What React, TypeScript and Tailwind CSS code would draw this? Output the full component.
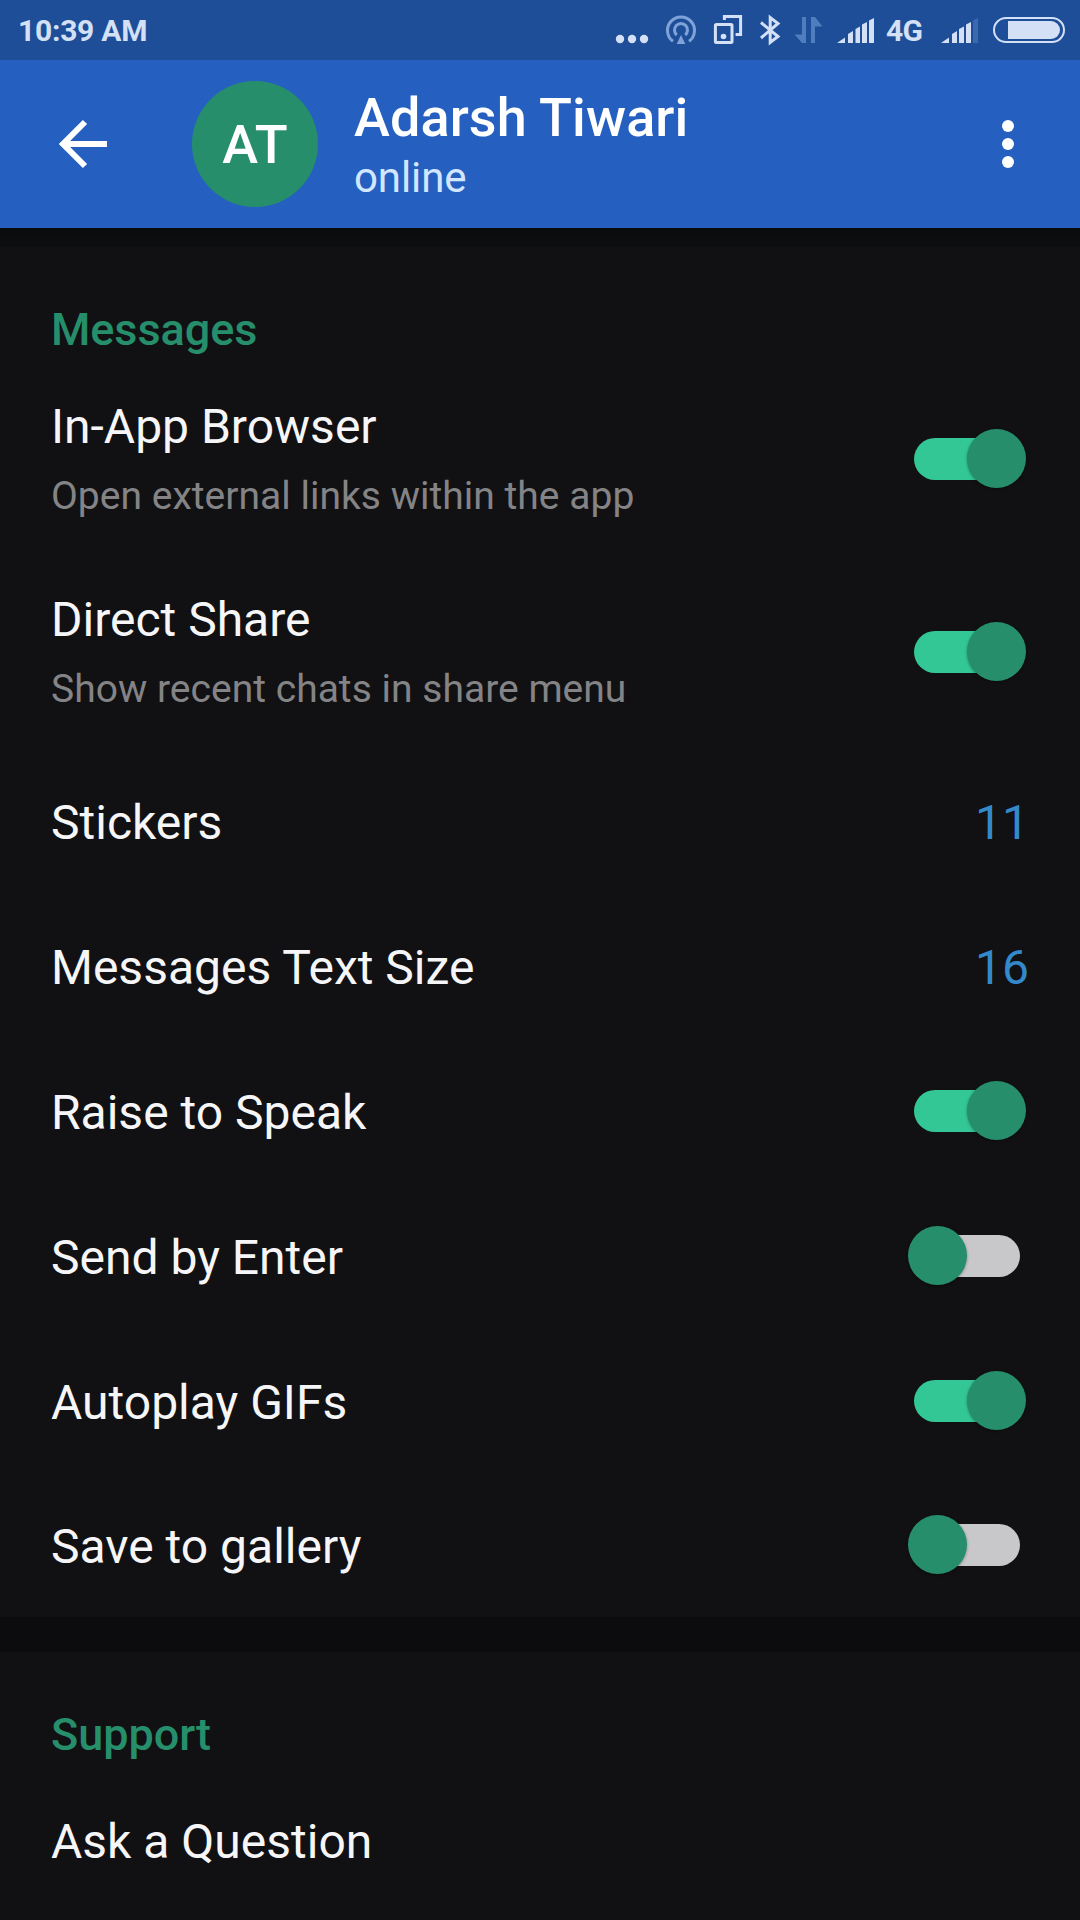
type SettingRowProps = {
  label: string
  hint?: string
  value?: string
  checked?: boolean
}

function Switch({ checked }: { checked: boolean }) {
  return (
    <div
      role="switch"
      aria-checked={checked}
      className={`mr-[54px] flex h-[59px] w-[118px] shrink-0 items-center ${checked ? 'justify-end' : 'justify-start'}`}
    >
      <div
        className={`flex h-[42px] w-[106px] items-center rounded-full ${
          checked ? 'mr-1.5 justify-end bg-[#33c796]' : 'ml-1.5 justify-start bg-[#c8c8ca]'
        }`}
      >
        <div
          className={`size-[59px] shrink-0 rounded-full bg-[#268e6b] shadow-[0_1px_3px_rgba(0,0,0,0.35)] ${
            checked ? '-mr-1.5' : '-ml-1.5'
          }`}
        />
      </div>
    </div>
  )
}

function SettingRow({ label, hint, value, checked }: SettingRowProps) {
  return (
    <div className={`flex items-center justify-between pl-[51px] ${hint ? 'h-[193px]' : 'h-[145px]'}`}>
      <div className={hint ? '' : 'pt-[5px]'}>
        <div className="text-[48px] leading-[56px] whitespace-nowrap text-[#f6f6f8]">{label}</div>
        {hint && (
          <div className="mt-[18px] text-[39px] leading-[46px] tracking-[0.02px] whitespace-nowrap text-[#848486]">
            {hint}
          </div>
        )}
      </div>
      {value && <div className="pt-[5px] pr-[51px] text-[48px] leading-[56px] text-[#3489cb]">{value}</div>}
      {checked !== undefined && <Switch checked={checked} />}
    </div>
  )
}

function SectionTitle({ children }: { children: string }) {
  return (
    <h2 className="h-[115px] pt-[57px] pl-[51px] text-[45px] leading-[52px] font-medium tracking-[-0.05px] text-[#268e6b]">
      {children}
    </h2>
  )
}

function StatusIcons() {
  return (
    <svg width="480" height="60" viewBox="600 0 480 60" fill="#d3e0f5">
      {/* more notifications */}
      <circle cx="620" cy="39" r="4.2" />
      <circle cx="632" cy="39" r="4.2" />
      <circle cx="644" cy="39" r="4.2" />
      {/* hotspot */}
      <g fill="none" stroke="#7fa3d8" strokeWidth="3">
        <path d="M673 41.3A13.5 13.5 0 1 1 689 41.3" />
        <path d="M676.8 35A6.5 6.5 0 1 1 685.2 35" />
      </g>
      <path d="M681 35l4.3 9h-8.6z" fill="#7fa3d8" />
      {/* screen share */}
      <g fill="none" stroke="#d3e0f5" strokeWidth="3">
        <rect x="715.4" y="24.4" width="16.6" height="18.2" rx="1" />
        <path d="M724.4 20v-3.6h16.2v18.2h-5" />
      </g>
      <circle cx="723.5" cy="36.5" r="2.8" />
      {/* bluetooth */}
      <path
        d="M761 22.5L778 36.5 770.2 42.5V17.5L778 23.5 761 38"
        fill="none"
        stroke="#d3e0f5"
        strokeWidth="3"
      />
      {/* mobile data */}
      <path d="M802 17h4v26h-4l-7.5-8.500H802zM811 17h4l7.5 9.500H815V43h-4z" fill="#4f7dbe" />
      {/* signal, first sim */}
      <path d="M837 43l8-5.500V43zM848 34l5-3v12h-5zM855.5 29l4.500-2.500V43h-4.500zM862 24.500l5-2.500v21h-5zM869 20.500l5-2.500v25h-5z" />
      <text
        x="886"
        y="41"
        fontSize="30"
        fontWeight="700"
        fontFamily="Roboto, sans-serif"
        textLength="37"
      >
        4G
      </text>
      {/* signal, second sim */}
      <path d="M941 43l8-5.500V43zM952 34l5-3v12h-5zM959 29l5-2.500V43h-5zM966 24.500l5-2.500v21h-5z" />
      <path d="M973 20.500l5-2.500v25h-5z" fill="#3c69ad" />
      {/* battery */}
      <rect x="994" y="18" width="70" height="24" rx="12" fill="none" stroke="#d3e0f5" strokeWidth="2" />
      <path d="M1008 21h43a9 9 0 0 1 0 18h-43z" />
    </svg>
  )
}

function StatusBar() {
  return (
    <div className="flex h-[60px] items-center justify-between bg-[#1f4e99] pl-[18px]">
      <span className="pt-0.5 text-[30px] leading-none font-bold tracking-[-0.25px] text-[#d3e0f5]">10:39 AM</span>
      <StatusIcons />
    </div>
  )
}

function Header() {
  return (
    <header className="flex h-[168px] items-center bg-[#2560c1] pl-[58px] text-white">
      <svg width="50" height="50" viewBox="0 0 50 50" fill="none" stroke="currentColor" strokeWidth="6">
        <path d="M49 25H5M27 3L5 25L27 47" />
      </svg>
      <div className="ml-[84px] flex size-[126px] items-center justify-center rounded-full bg-[#268e6b] text-[54px] font-medium">
        AT
      </div>
      <div className="ml-9 grow">
        <h1 className="text-[54px] leading-[64px] font-medium tracking-[0.1px]">Adarsh Tiwari</h1>
        <p className="mt-[3px] text-[42px] leading-[50px] tracking-[-0.1px] text-[#d2e6ff]">online</p>
      </div>
      <svg width="144" height="60" viewBox="936 114 144 60" fill="currentColor">
        <circle cx="1008" cy="126" r="6" />
        <circle cx="1008" cy="144" r="6" />
        <circle cx="1008" cy="162" r="6" />
      </svg>
    </header>
  )
}

export default function App() {
  return (
    <div className="h-[1920px] w-[1080px] overflow-hidden bg-[#111113] font-[Roboto,sans-serif]">
      <StatusBar />
      <Header />
      {/* shadow under the header */}
      <div className="h-[19px] bg-linear-to-b from-[#0a0b0c] to-[#0d0e0f]" />
      <section>
        <SectionTitle>Messages</SectionTitle>
        <SettingRow label="In-App Browser" hint="Open external links within the app" checked />
        <SettingRow label="Direct Share" hint="Show recent chats in share menu" checked />
        <SettingRow label="Stickers" value="11" />
        <SettingRow label="Messages Text Size" value="16" />
        <SettingRow label="Raise to Speak" checked />
        <SettingRow label="Send by Enter" checked={false} />
        <SettingRow label="Autoplay GIFs" checked />
        <div className="-mt-px">
          <SettingRow label="Save to gallery" checked={false} />
        </div>
      </section>
      <div className="h-[35px] bg-[#0c0c0e]" />
      <section>
        <SectionTitle>Support</SectionTitle>
        <SettingRow label="Ask a Question" />
      </section>
    </div>
  )
}
